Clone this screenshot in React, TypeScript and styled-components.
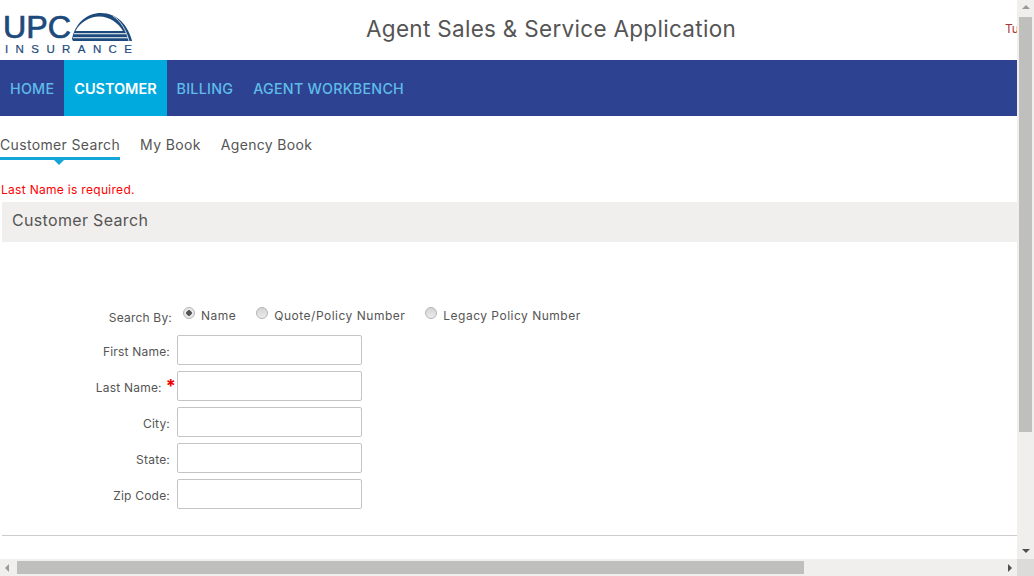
import { FC } from 'react'
import styled, { createGlobalStyle } from 'styled-components'

const GlobalStyle = createGlobalStyle`
  html, body { margin: 0; padding: 0; overflow: hidden; background: #fff; }
  * { box-sizing: border-box; }
`

// Window with the browser scrollbars around the clipped page
const Viewport = styled.div`
  width: 1034px;
  height: 576px;
  display: grid;
  grid-template-columns: 1017px 17px;
  grid-template-rows: 559px 17px;
  font-family: Inter, "Liberation Sans", sans-serif;
  color: #555;
`
const Page = styled.div`
  overflow: hidden;
  background: #fff;
`
const Header = styled.header`
  height: 60px;
  display: flex;
  align-items: center;
  position: relative;
`
const LogoWrap = styled.div`
  width: 136px;
  height: 60px;
  flex: none;
`
const Title = styled.h1`
  margin: 0 0 4px 230px;
  font-size: 22.5px;
  font-weight: 400;
  letter-spacing: 0.3px;
  color: #555;
  white-space: nowrap;
`
const UserName = styled.span`
  position: absolute;
  left: 1005px;
  top: 21px;
  font-size: 12px;
  color: #a33;
  white-space: nowrap;
`
const Nav = styled.nav`
  height: 56px;
  background: #2d4290;
  display: flex;
`
const NavItem = styled.a<{ $active?: boolean }>`
  display: flex;
  align-items: center;
  padding: 0 10px;
  font-size: ${p => (p.$active ? 14.5 : 14.3)}px;
  font-weight: ${p => (p.$active ? 600 : 500)};
  letter-spacing: ${p => (p.$active ? '-0.05px' : '0.25px')};
  color: ${p => (p.$active ? '#fff' : '#5fbce9')};
  background: ${p => (p.$active ? '#00aade' : 'transparent')};
`
const Tabs = styled.div`
  display: flex;
  gap: 20px;
  height: 44px;
  padding-top: 19px;
`
const Tab = styled.a<{ $active?: boolean }>`
  position: relative;
  height: 25px;
  font-size: 14px;
  letter-spacing: 0.35px;
  line-height: 19px;
  color: #555;
  white-space: nowrap;
  border-bottom: ${p => (p.$active ? '3px solid #14a6d8' : 'none')};
  ${p => p.$active && `
    &::after {
      content: '';
      position: absolute;
      left: 54px;
      bottom: -8px;
      border: 5px solid transparent;
      border-bottom: 0;
      border-top-color: #14a6d8;
    }
  `}
`
const ErrorText = styled.div`
  margin: 22px 0 0 1px;
  height: 20px;
  font-size: 12px;
  letter-spacing: 0.3px;
  line-height: 16px;
  color: #f00;
`
const SectionBar = styled.div`
  height: 40px;
  margin-left: 2px;
  padding-left: 10px;
  background: #f0efed;
  font-size: 16px;
  letter-spacing: 0.33px;
  line-height: 37px;
  color: #555;
`
const Form = styled.form`
  padding-top: 62px;
  margin-left: 2px;
  height: 294px;
  border-bottom: 1px solid #ccc;
`
const RadioRow = styled.div`
  display: flex;
  align-items: center;
  height: 24px;
  margin-bottom: 7px;
`
const RowLabel = styled.label<{ $width?: number }>`
  width: ${p => p.$width ?? 168}px;
  flex: none;
  text-align: right;
  font-size: 12px;
  letter-spacing: 0.2px;
  color: #555;
  margin-top: 3px;
`
const RadioOption = styled.label<{ $first?: boolean }>`
  display: flex;
  align-items: center;
  gap: 6px;
  margin-top: -2px;
  margin-left: ${p => (p.$first ? 11 : 0)}px;
  margin-right: 20px;
  font-size: 12px;
  letter-spacing: 0.5px;
  color: #555;
  white-space: nowrap;
`
const RadioDot = styled.span<{ $checked?: boolean }>`
  width: 12px;
  height: 12px;
  border-radius: 50%;
  border: 1px solid #b4b4b4;
  background: ${p =>
    p.$checked
      ? 'radial-gradient(circle, #555 0 2.5px, #e8e8e8 3px)'
      : 'linear-gradient(#d4d4d4, #ececec)'};
  margin-top: -5px;
`
const Field = styled.div`
  display: flex;
  align-items: center;
  height: 30px;
  margin-bottom: 6px;
`
const Required = styled.span`
  color: #e00;
  font-weight: 700;
  font-size: 18px;
  line-height: 10px;
  margin-left: 4px;
  margin-right: -6px;
`
const TextInput = styled.input`
  width: 185px;
  height: 30px;
  margin-left: 7px;
  border: 1px solid #c4c4c4;
  border-radius: 2px;
  background: #fff;
  flex: none;
`
const ScrollTrack = styled.div<{ $vertical?: boolean }>`
  background: #f0efee;
  display: flex;
  flex-direction: ${p => (p.$vertical ? 'column' : 'row')};
  align-items: center;
  justify-content: space-between;
  position: relative;
`
const ScrollThumb = styled.div<{ $vertical?: boolean }>`
  position: absolute;
  background: #bfbfbd;
  ${p =>
    p.$vertical
      ? 'left: 2px; top: 17px; width: 13px; height: 415px;'
      : 'left: 17px; top: 2px; width: 787px; height: 13px;'}
`
const Arrow = styled.span<{ $dir: 'up' | 'down' | 'left' | 'right' }>`
  width: 0;
  height: 0;
  border: 4px solid transparent;
  ${p => p.$dir === 'up' && 'border-top: 0; border-bottom-color: #9a9a98; margin-top: 5px;'}
  ${p => p.$dir === 'down' && 'border-bottom: 0; border-top-color: #505050; margin-bottom: 6px;'}
  ${p => p.$dir === 'left' && 'border-left: 0; border-right-color: #9a9a98; margin-left: 5px;'}
  ${p => p.$dir === 'right' && 'border-right: 0; border-left-color: #505050; margin-right: 5px;'}
`
const ScrollCorner = styled.div`
  background: #dcdbd9;
`

const Logo: FC = () => (
  <svg width="136" height="60" viewBox="0 0 136 60">
    <text x="3" y="38" fontFamily="'Liberation Sans', sans-serif" fontSize="31" fill="#1d4a7c" stroke="#1d4a7c" strokeWidth="0.7" textLength="68" lengthAdjust="spacingAndGlyphs">UPC</text>
    <path d="M72 39 C75 23 87 13 101 13 C117 13 128 25 132 41 L73 41 Z" fill="#1d4a7c" />
    <path d="M75.500 31 C80 22 90 16.500 99 16.500 C110 16.500 118 23 123 31 Z" fill="#fff" />
    <path d="M74 33.800 H126 M73 37.800 H128" stroke="#fff" strokeWidth="1.100" fill="none" />
    <path d="M113 16 C121 21 126 30 129 41" stroke="#dfe6ee" strokeWidth="0.900" fill="none" />
    <text x="5" y="52.500" fontFamily="'Liberation Sans', sans-serif" fontSize="11.500" fill="#1d4a7c" stroke="#1d4a7c" strokeWidth="0.2" textLength="127">INSURANCE</text>
  </svg>
)

const formFields = [
  { label: 'First Name:' },
  { label: 'Last Name:', required: true },
  { label: 'City:' },
  { label: 'State:' },
  { label: 'Zip Code:' },
]

const App = () => (
  <Viewport>
    <GlobalStyle />
    <Page>
      <Header>
        <LogoWrap><Logo /></LogoWrap>
        <Title>Agent Sales &amp; Service Application</Title>
        <UserName>Tu</UserName>
      </Header>
      <Nav>
        <NavItem>HOME</NavItem>
        <NavItem $active>CUSTOMER</NavItem>
        <NavItem>BILLING</NavItem>
        <NavItem>AGENT WORKBENCH</NavItem>
      </Nav>
      <Tabs>
        <Tab $active>Customer Search</Tab>
        <Tab>My Book</Tab>
        <Tab>Agency Book</Tab>
      </Tabs>
      <ErrorText>Last Name is required.</ErrorText>
      <SectionBar>Customer Search</SectionBar>
      <Form>
        <RadioRow>
          <RowLabel $width={170}>Search By:</RowLabel>
          <RadioOption $first><RadioDot $checked />Name</RadioOption>
          <RadioOption><RadioDot />Quote/Policy Number</RadioOption>
          <RadioOption><RadioDot />Legacy Policy Number</RadioOption>
        </RadioRow>
        {formFields.map(f => (
          <Field key={f.label}>
            <RowLabel>
              {f.label}
              {f.required && <Required>*</Required>}
            </RowLabel>
            <TextInput type="text" />
          </Field>
        ))}
      </Form>
    </Page>
    <ScrollTrack $vertical>
      <Arrow $dir="up" />
      <ScrollThumb $vertical />
      <Arrow $dir="down" />
    </ScrollTrack>
    <ScrollTrack>
      <Arrow $dir="left" />
      <ScrollThumb />
      <Arrow $dir="right" />
    </ScrollTrack>
    <ScrollCorner />
  </Viewport>
)

export default App
